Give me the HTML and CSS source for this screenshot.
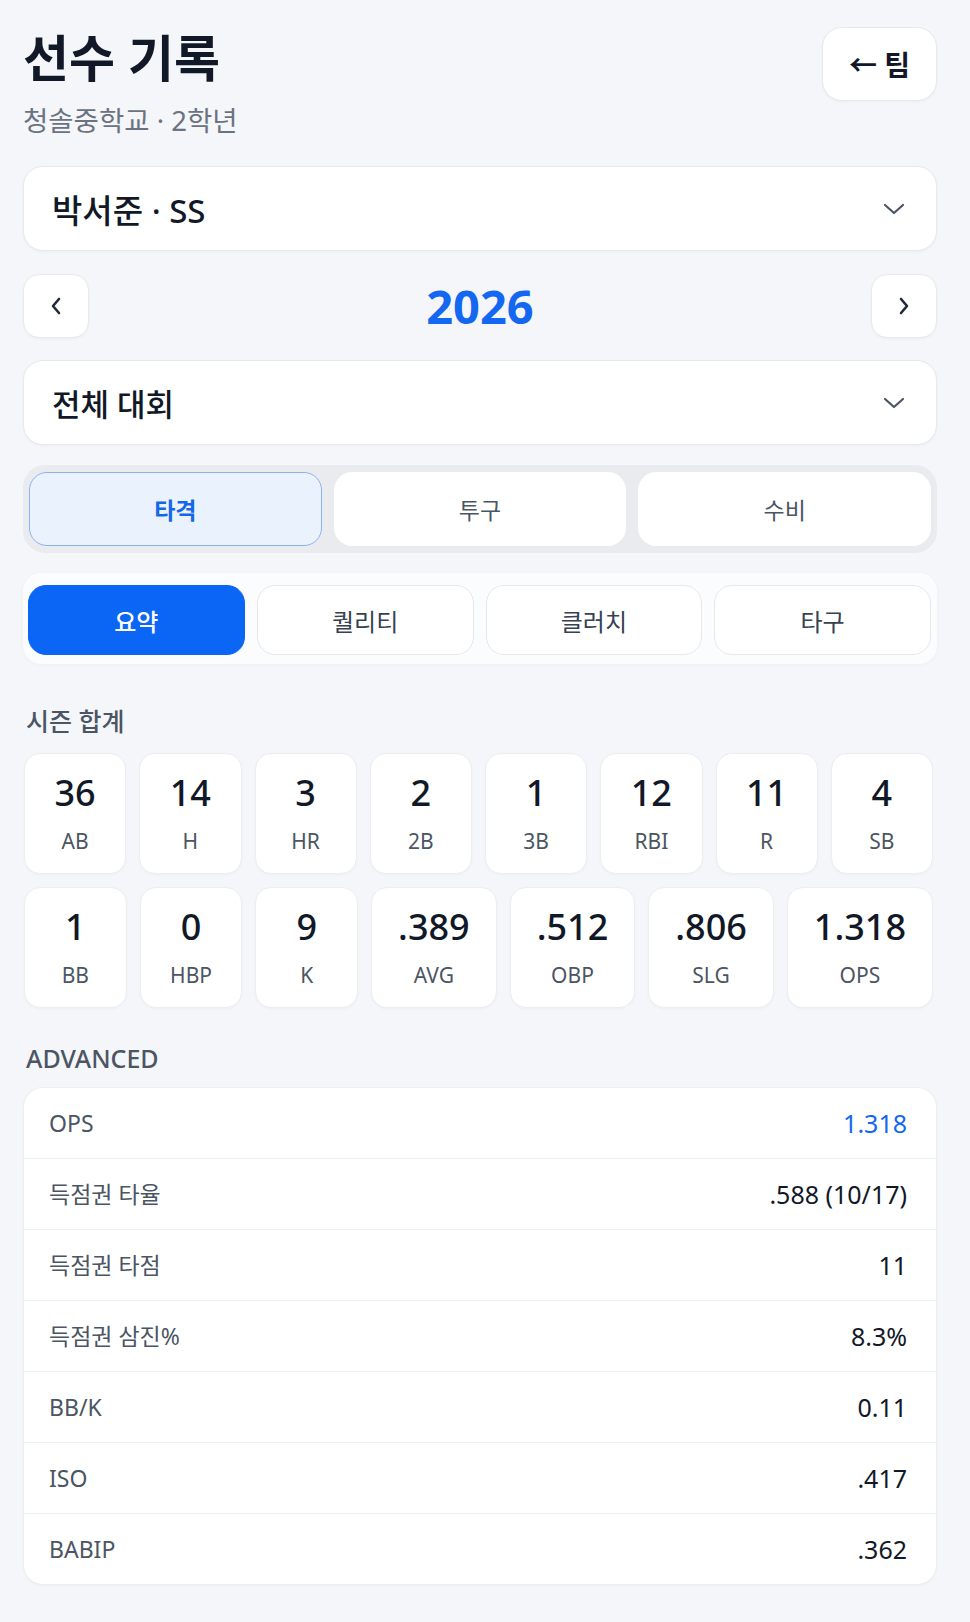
FILE: index.html
```html
<!DOCTYPE html>
<html lang="ko">
<head>
	<meta charset="UTF-8">
	<title>선수 기록</title>
	<link rel="stylesheet" href="styles.css">
</head>
<body>
	<div class="page">
		<!-- 상단 제목 -->
		<header class="top">
			<div class="title-box">
				<h1 class="title">선수 기록</h1>
				<p class="sub">청솔중학교 · 2학년</p>
			</div>
			<a href="#" class="back-btn">← 팀</a>
		</header>

		<!-- 선수 선택 -->
		<div class="select player-select">
			<span>박서준 · SS</span>
			<svg class="chev" width="22" height="12" viewBox="0 0 22 12"><path d="M2 2 L11 10 L20 2" fill="none" stroke="#4b5563" stroke-width="2.2" stroke-linecap="round" stroke-linejoin="round"/></svg>
		</div>

		<!-- 연도 -->
		<div class="year-nav">
			<a href="#" class="nav-btn">
				<svg width="12" height="18" viewBox="0 0 12 18"><path d="M9 2 L3 9 L9 16" fill="none" stroke="#1f2937" stroke-width="2.6" stroke-linecap="round" stroke-linejoin="round"/></svg>
			</a>
			<span class="year">2026</span>
			<a href="#" class="nav-btn">
				<svg width="12" height="18" viewBox="0 0 12 18"><path d="M3 2 L9 9 L3 16" fill="none" stroke="#1f2937" stroke-width="2.6" stroke-linecap="round" stroke-linejoin="round"/></svg>
			</a>
		</div>

		<!-- 대회 선택 -->
		<div class="select cup-select">
			<span>전체 대회</span>
			<svg class="chev" width="22" height="12" viewBox="0 0 22 12"><path d="M2 2 L11 10 L20 2" fill="none" stroke="#4b5563" stroke-width="2.2" stroke-linecap="round" stroke-linejoin="round"/></svg>
		</div>

		<!-- 타격 / 투구 / 수비 -->
		<div class="seg">
			<a href="#" class="seg-item on">타격</a>
			<a href="#" class="seg-item">투구</a>
			<a href="#" class="seg-item">수비</a>
		</div>

		<!-- 하위 탭 -->
		<div class="subtabs">
			<a href="#" class="subtab on">요약</a>
			<a href="#" class="subtab">퀄리티</a>
			<a href="#" class="subtab">클러치</a>
			<a href="#" class="subtab">타구</a>
		</div>

		<h2 class="label season-label">시즌 합계</h2>
		<div class="stats">
			<div class="stat"><b>36</b><span>AB</span></div>
			<div class="stat"><b>14</b><span>H</span></div>
			<div class="stat"><b>3</b><span>HR</span></div>
			<div class="stat"><b>2</b><span>2B</span></div>
			<div class="stat"><b>1</b><span>3B</span></div>
			<div class="stat"><b>12</b><span>RBI</span></div>
			<div class="stat"><b>11</b><span>R</span></div>
			<div class="stat"><b>4</b><span>SB</span></div>
			<div class="stat"><b>1</b><span>BB</span></div>
			<div class="stat"><b>0</b><span>HBP</span></div>
			<div class="stat"><b>9</b><span>K</span></div>
			<div class="stat"><b>.389</b><span>AVG</span></div>
			<div class="stat"><b>.512</b><span>OBP</span></div>
			<div class="stat"><b>.806</b><span>SLG</span></div>
			<div class="stat"><b>1.318</b><span>OPS</span></div>
		</div>

		<h2 class="label adv-label">ADVANCED</h2>
		<div class="adv">
			<div class="row"><span class="k">OPS</span><span class="v blue">1.318</span></div>
			<div class="row"><span class="k">득점권 타율</span><span class="v">.588 (10/17)</span></div>
			<div class="row"><span class="k">득점권 타점</span><span class="v">11</span></div>
			<div class="row"><span class="k">득점권 삼진%</span><span class="v">8.3%</span></div>
			<div class="row"><span class="k">BB/K</span><span class="v">0.11</span></div>
			<div class="row"><span class="k">ISO</span><span class="v">.417</span></div>
			<div class="row"><span class="k">BABIP</span><span class="v">.362</span></div>
		</div>
	</div>
</body>
</html>
```

FILE: styles.css
```css
*{
	margin: 0;
	padding: 0;
	box-sizing: border-box;
}
body{
	background: #f4f6fa;
	font-family: "Noto Sans", "Noto Sans CJK KR", sans-serif;
	color: #111827;
}
a{
	text-decoration: none;
	color: inherit;
}
.page{
	padding: 27px 33px 30px 23px;
}

/* 상단 */
.top{
	display: flex;
	justify-content: space-between;
	align-items: flex-start;
}
.title{
	font-size: 50px;
	line-height: 56px;
	font-weight: 700;
	margin-top: 3px;
}
.sub{
	font-size: 27.5px;
	line-height: 32px;
	color: #6b7280;
	margin-top: 19px;
}
.back-btn{
	width: 115px;
	height: 74px;
	display: flex;
	align-items: center;
	justify-content: center;
	background: #fff;
	border: 1px solid #e6e9ee;
	border-radius: 20px;
	font-size: 28px;
	font-weight: 700;
	box-shadow: 0 1px 3px rgba(17,24,39,0.04);
}

/* 선택 박스 */
.select{
	height: 85px;
	display: flex;
	align-items: center;
	justify-content: space-between;
	padding: 0 31px 0 28px;
	background: #fff;
	border: 1px solid #e6e9ee;
	border-radius: 20px;
	font-size: 33px;
	font-weight: 500;
	box-shadow: 0 1px 3px rgba(17,24,39,0.04);
}
.player-select{
	margin-top: 29px;
}
.cup-select{
	margin-top: 22px;
	font-size: 31px;
}

/* 연도 */
.year-nav{
	margin-top: 23px;
	height: 64px;
	display: flex;
	align-items: center;
	justify-content: space-between;
}
.nav-btn{
	width: 66px;
	height: 64px;
	display: flex;
	align-items: center;
	justify-content: center;
	background: #fff;
	border: 1px solid #e6e9ee;
	border-radius: 16px;
	box-shadow: 0 1px 3px rgba(17,24,39,0.04);
}
.year{
	font-size: 47px;
	font-weight: 700;
	color: #1467f0;
}

/* 세그먼트 */
.seg{
	margin-top: 20px;
	display: flex;
	gap: 12px;
	padding: 7px 6px;
	background: #e9ebef;
	border-radius: 22px;
}
.seg-item{
	flex: 1;
	height: 74px;
	display: flex;
	align-items: center;
	justify-content: center;
	background: #fff;
	border: 1px solid #fff;
	border-radius: 18px;
	font-size: 23px;
	color: #4b5563;
}
.seg-item.on{
	background: #eaf2fe;
	border-color: #8db2f1;
	color: #1467e6;
	font-weight: 700;
}

/* 하위 탭 */
.subtabs{
	margin-top: 20px;
	display: flex;
	gap: 12px;
	padding: 12px 6px 9px 5px;
	background: #fbfcfe;
	border-radius: 18px;
	box-shadow: 0 1px 4px rgba(17,24,39,0.03);
}
.subtab{
	flex: 1;
	height: 70px;
	display: flex;
	align-items: center;
	justify-content: center;
	background: #fff;
	border: 1px solid #e6e8ec;
	border-radius: 18px;
	font-size: 24px;
	color: #374151;
}
.subtab.on{
	background: #0b65f5;
	border-color: #0b65f5;
	color: #fff;
	font-weight: 500;
}

/* 섹션 라벨 */
.label{
	font-size: 25px;
	line-height: 30px;
	font-weight: 500;
	color: #4b5563;
	padding-left: 3px;
}
.season-label{
	margin-top: 42px;
}
.adv-label{
	margin-top: 35px;
}

/* 시즌 기록 */
.stats{
	margin-top: 17px;
	display: flex;
	flex-wrap: wrap;
	gap: 13px;
	padding: 0 4px 0 1px;
}
.stat{
	flex: 1 1 0;
	display: flex;
	flex-direction: column;
	align-items: center;
	padding: 17px 26px 19px;
	background: #fff;
	border: 1px solid #eceef2;
	border-radius: 16px;
	box-shadow: 0 1px 3px rgba(17,24,39,0.03);
}
.stat b{
	min-width: 46px;
	text-align: center;
	font-size: 36px;
	line-height: 43px;
	font-weight: 500;
	white-space: nowrap;
}
.stat span{
	margin-top: 14px;
	font-size: 21px;
	line-height: 26px;
	color: #4b5563;
}

/* ADVANCED */
.adv{
	margin-top: 14px;
	background: #fff;
	border: 1px solid #eceef1;
	border-radius: 20px;
	overflow: hidden;
	box-shadow: 0 1px 3px rgba(17,24,39,0.03);
}
.row{
	height: 71px;
	display: flex;
	align-items: center;
	justify-content: space-between;
	padding: 0 29px 0 25px;
	border-bottom: 1px solid #eceef1;
	line-height: 30px;
}
.row:last-child{
	border-bottom: none;
	height: 70px;
}
.row .k{
	font-size: 23px;
	color: #4b5563;
}
.row .v{
	font-size: 25px;
	color: #111827;
}
.row .v.blue{
	color: #1467f0;
}
```
